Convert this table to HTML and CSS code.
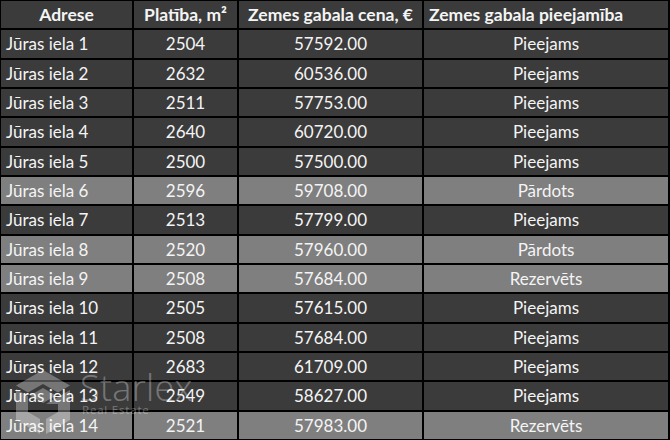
FILE: index.html
```html
<!DOCTYPE html>
<html lang="lv">
<head>
<meta charset="utf-8">
<link rel="stylesheet" href="styles.css">
</head>
<body>
<div class="page">
  <div class="sheet">
    <div class="c hd center">Adrese</div>
    <div class="c hd center">Platība, m²</div>
    <div class="c hd center">Zemes gabala cena, €</div>
    <div class="c hd">Zemes gabala pieejamība</div>

    <div class="c">Jūras iela 1</div><div class="c center">2504</div><div class="c center">57592.00</div><div class="c center">Pieejams</div>
    <div class="c">Jūras iela 2</div><div class="c center">2632</div><div class="c center">60536.00</div><div class="c center">Pieejams</div>
    <div class="c">Jūras iela 3</div><div class="c center">2511</div><div class="c center">57753.00</div><div class="c center">Pieejams</div>
    <div class="c">Jūras iela 4</div><div class="c center">2640</div><div class="c center">60720.00</div><div class="c center">Pieejams</div>
    <div class="c">Jūras iela 5</div><div class="c center">2500</div><div class="c center">57500.00</div><div class="c center">Pieejams</div>
    <div class="c lt">Jūras iela 6</div><div class="c lt center">2596</div><div class="c lt center">59708.00</div><div class="c lt center">Pārdots</div>
    <div class="c">Jūras iela 7</div><div class="c center">2513</div><div class="c center">57799.00</div><div class="c center">Pieejams</div>
    <div class="c lt">Jūras iela 8</div><div class="c lt center">2520</div><div class="c lt center">57960.00</div><div class="c lt center">Pārdots</div>
    <div class="c lt">Jūras iela 9</div><div class="c lt center">2508</div><div class="c lt center">57684.00</div><div class="c lt center">Rezervēts</div>
    <div class="c">Jūras iela 10</div><div class="c center">2505</div><div class="c center">57615.00</div><div class="c center">Pieejams</div>
    <div class="c">Jūras iela 11</div><div class="c center">2508</div><div class="c center">57684.00</div><div class="c center">Pieejams</div>
    <div class="c">Jūras iela 12</div><div class="c center">2683</div><div class="c center">61709.00</div><div class="c center">Pieejams</div>
    <div class="c">Jūras iela 13</div><div class="c center">2549</div><div class="c center">58627.00</div><div class="c center">Pieejams</div>
    <div class="c lt">Jūras iela 14</div><div class="c lt center">2521</div><div class="c lt center">57983.00</div><div class="c lt center">Rezervēts</div>
  </div>

  <div class="mark">
    <svg class="mark-logo" width="62" height="72" viewBox="0 0 62 72">
      <g fill="#ffffff">
        <polygon points="31,2 58,17.5 46,24.5 31,16 16,24.5 4,17.5"/>
        <polygon points="4,21 16,28 16,44 28,51 28,66 4,52"/>
        <polygon points="34,36 58,22 58,52 34,66 34,51 46,44 46,36"/>
        <polygon points="31,20 44,27.5 31,35 18,27.5"/>
      </g>
    </svg>
    <div class="mark-text">
      <div class="mark-name">Starlex</div>
      <div class="mark-sub">Real Estate</div>
    </div>
  </div>
</div>
</body>
</html>
```

FILE: styles.css
```css
html, body {
  margin: 0;
  padding: 0;
  background: #000000;
}

.page {
  position: relative;
  width: 670px;
  height: 440px;
  overflow: hidden;
}

.sheet {
  display: grid;
  grid-template-columns: 131px 103px 183px 244px;
  grid-template-rows: repeat(15, 1fr);
  gap: 2px;
  padding: 1px;
  width: 668px;
  height: 440px;
  box-sizing: border-box;
  background: #000000;
  font-family: Lato, "Open Sans", sans-serif;
  font-size: 17px;
  color: #f4f4f4;
}

.c {
  background: #3b3b3b;
  display: flex;
  align-items: center;
  padding: 0 5px;
  white-space: nowrap;
  overflow: hidden;
  line-height: 1;
}

.c.center {
  justify-content: center;
}

.c.lt {
  background: #7f7f7f;
}

.c.hd {
  font-weight: 700;
  font-size: 17.5px;
}

.mark {
  position: absolute;
  left: 12px;
  top: 368px;
  display: flex;
  align-items: flex-start;
  gap: 6px;
  opacity: 0.3;
  pointer-events: none;
}

.mark-logo {
  display: block;
}

.mark-text {
  display: flex;
  flex-direction: column;
  padding-top: 3px;
  color: #ffffff;
  font-family: "Open Sans", sans-serif;
}

.mark-name {
  font-size: 36px;
  font-weight: 300;
  line-height: 33px;
  letter-spacing: 0.3px;
}

.mark-sub {
  font-size: 11.5px;
  line-height: 12px;
  letter-spacing: 0.8px;
  padding-left: 2px;
}
```
